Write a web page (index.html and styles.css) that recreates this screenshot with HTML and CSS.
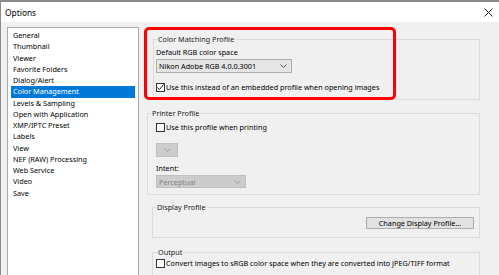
FILE: index.html
```html
<!DOCTYPE html>
<html>
<head>
<meta charset="utf-8">
<link rel="stylesheet" href="styles.css">
</head>
<body>
<div class="window">
  <div class="titlebar">
    <span class="title">Options</span>
    <svg class="close" width="9" height="9" viewBox="0 0 9 9"><path d="M0.5 0.5 L8.5 8.5 M8.5 0.5 L0.5 8.5" stroke="#222" stroke-width="1" fill="none"/></svg>
  </div>
  <div class="body">
    <ul class="sidebar">
      <li>General</li>
      <li>Thumbnail</li>
      <li>Viewer</li>
      <li>Favorite Folders</li>
      <li>Dialog/Alert</li>
      <li class="sel">Color Management</li>
      <li>Levels &amp; Sampling</li>
      <li>Open with Application</li>
      <li>XMP/IPTC Preset</li>
      <li>Labels</li>
      <li>View</li>
      <li>NEF (RAW) Processing</li>
      <li>Web Service</li>
      <li>Video</li>
      <li>Save</li>
    </ul>
    <div class="main">
      <fieldset class="group g1">
        <legend>Color Matching Profile</legend>
        <div class="label l1">Default RGB color space</div>
        <div class="combo c1"><span>Nikon Adobe RGB 4.0.0.3001</span><svg class="chev" width="7" height="4" viewBox="0 0 7 4"><path d="M0.5 0.5 L3.5 3.5 L6.5 0.5" stroke="#555" fill="none"/></svg></div>
        <div class="check-row r1"><span class="box"><svg width="9" height="9" viewBox="0 0 9 9"><path d="M1.5 4.5 L3.5 6.5 L7.5 1.5" stroke="#222" stroke-width="1" fill="none"/></svg></span><span>Use this instead of an embedded profile when opening images</span></div>
      </fieldset>
      <fieldset class="group g2">
        <legend>Printer Profile</legend>
        <div class="check-row r2"><span class="box"></span><span>Use this profile when printing</span></div>
        <div class="combo disabled c2"><svg class="chev" width="7" height="4" viewBox="0 0 7 4"><path d="M0.5 0.5 L3.5 3.5 L6.5 0.5" stroke="#a0a0a0" fill="none"/></svg></div>
        <div class="label l2">Intent:</div>
        <div class="combo disabled c3"><span>Perceptual</span><svg class="chev" width="7" height="4" viewBox="0 0 7 4"><path d="M0.5 0.5 L3.5 3.5 L6.5 0.5" stroke="#a0a0a0" fill="none"/></svg></div>
      </fieldset>
      <fieldset class="group g3">
        <legend>Display Profile</legend>
        <div class="btn-row"><div class="btn">Change Display Profile...</div></div>
      </fieldset>
      <fieldset class="group g4">
        <legend>Output</legend>
        <div class="check-row r4"><span class="box"></span><span>Convert images to sRGB color space when they are converted into JPEG/TIFF format</span></div>
      </fieldset>
    </div>
    <div class="highlight"></div>
  </div>
</div>
</body>
</html>
```

FILE: styles.css
```css
html, body {
  margin: 0;
  padding: 0;
  background: #f0f0f0;
}
body {
  font-family: "Noto Sans", "Open Sans", sans-serif;
  font-size: 7.25px;
  color: #000;
}
.window {
  width: 499px;
  height: 275px;
  overflow: hidden;
  box-sizing: border-box;
  border-top: 2px solid #8a8a8a;
  border-left: 1px solid #8a8a8a;
  background: #f0f0f0;
}
.titlebar {
  height: 20px;
  background: #fff;
  display: flex;
  align-items: center;
  justify-content: space-between;
  padding: 0 6px 0 4px;
}
.title {
  font-size: 8.4px;
  color: #000;
}
.close {
  display: block;
}
.body {
  position: relative;
  display: flex;
  align-items: flex-start;
  padding: 5px 0 0 6px;
}
.sidebar {
  list-style: none;
  margin: 0;
  padding: 2px 3px;
  width: 132px;
  height: 260px;
  flex-shrink: 0;
  box-sizing: border-box;
  background: #fff;
  border: 1px solid #a9a9a9;
}
.sidebar li {
  height: 11.25px;
  line-height: 11.25px;
  padding-left: 2px;
  white-space: nowrap;
}
.sidebar li.sel {
  background: #0078d7;
  color: #fff;
}
.main {
  margin-left: 8px;
  width: 333px;
  flex-shrink: 0;
  padding-top: 6.5px;
  display: flex;
  flex-direction: column;
  align-items: flex-start;
}
.group {
  margin: 0;
  box-sizing: border-box;
  border: 1px solid #dcdcdc;
  padding: 0 0 0 2px;
  min-width: 0;
}
.group legend {
  padding: 0 1px;
  margin-left: 1px;
  line-height: 11px;
  color: #1a1a1a;
}
.g1 {
  width: 327px;
  margin-left: 6px;
  padding-bottom: 6px;
}
.g2 {
  width: 333px;
  margin-top: 7.5px;
  padding-left: 8px;
  padding-bottom: 6px;
}
.g3 {
  width: 328px;
  margin-top: 6.5px;
  margin-left: 5px;
  padding-bottom: 8px;
}
.g4 {
  width: 328px;
  margin-top: 8.5px;
  margin-left: 5px;
  padding-left: 3px;
  padding-bottom: 10px;
}
.g2 legend { margin-left: -5px; }
.label {
  line-height: 11px;
}
.l1 { margin-top: 2px; }
.l2 { margin-top: 5.5px; }
.combo {
  display: flex;
  align-items: center;
  justify-content: space-between;
  box-sizing: border-box;
  height: 14px;
  border: 1px solid #adadad;
  background: #e5e5e5;
  padding: 0 4px 0 2px;
}
.combo .chev { display: block; }
.c1 {
  width: 136px;
  margin-top: 1.5px;
}
.combo.disabled {
  background: #cccccc;
  border-color: #bfbfbf;
  color: #838383;
}
.c2 {
  width: 22px;
  margin-top: 10.5px;
  padding-right: 6px;
  justify-content: flex-end;
}
.c3 {
  width: 90px;
  margin-top: 1.5px;
  height: 13px;
}
.check-row {
  display: flex;
  align-items: center;
  line-height: 11px;
  white-space: nowrap;
}
.box {
  width: 9px;
  height: 9px;
  flex-shrink: 0;
  box-sizing: border-box;
  border: 1px solid #333;
  background: #fff;
  margin-right: 1px;
  position: relative;
}
.box svg {
  position: absolute;
  left: -1px;
  top: -1px;
}
.r1 { margin-top: 9px; }
.r2 { margin-top: 3px; }
.r4 { margin-top: 0.5px; }
.btn-row {
  display: flex;
  justify-content: flex-end;
  padding-right: 5px;
  margin-top: 4.5px;
}
.btn {
  width: 108px;
  height: 12px;
  box-sizing: border-box;
  border: 1px solid #adadad;
  background: #e1e1e1;
  text-align: center;
  line-height: 10px;
}
.highlight {
  position: absolute;
  left: 143px;
  top: 5px;
  width: 252px;
  height: 73px;
  box-sizing: border-box;
  border: 3px solid #f00;
  border-radius: 5px;
  pointer-events: none;
}
```
